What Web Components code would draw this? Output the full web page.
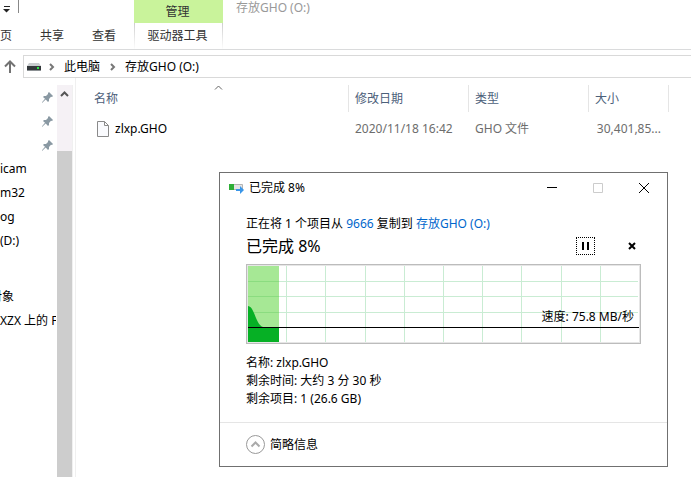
<!DOCTYPE html>
<html lang="zh-CN">
<head>
<meta charset="utf-8">
<title>存放GHO (O:)</title>
<style>
body{margin:0;min-height:100vh;background:#fff;color:#000;font:12px/18px "Noto Sans","Noto Sans CJK SC",sans-serif;overflow:hidden}
</style>
</head>
<body>
<explorer-window></explorer-window>
<script>
const define=(name,html)=>{
  const t=document.createElement('template');
  t.innerHTML='<style>*{box-sizing:border-box}button{font:inherit;color:inherit;background:none;border:0;padding:0;margin:0}svg{display:block}</style>'+html;
  customElements.define(name,class extends HTMLElement{
    constructor(){super();this.attachShadow({mode:'open'}).append(t.content.cloneNode(true));}
  });
};

define('ribbon-header',`
<style>
:host{display:grid;grid-template-columns:134px 89px 1fr;grid-template-rows:23px 26px;border-bottom:1px solid #dadbdc;color:#333}
.quick{display:flex;gap:8px;padding-left:3px}
.quick i{width:1px;height:13px;background:#888}
.manage{background:#c9f39b;text-align:center;padding-right:2px}
.title{color:#999;padding-left:13px;line-height:16px}
nav{display:flex;gap:28px;align-items:center}
.tool{border:1px solid;border-width:0 1px;border-image:linear-gradient(#ccc,#fff) 1;line-height:26px;padding-right:2px}
button{white-space:nowrap}
</style>
<div class="quick"><svg width="7" height="13"><path d="M1 6.500h6" stroke="#222"/><path d="M0 9h7L3.500 12.500z" fill="#222"/></svg><i></i></div>
<button class="manage">管理</button><div class="title">存放GHO (O:)</div>
<nav><button>页</button><button>共享</button><button>查看</button></nav>
<button class="tool">驱动器工具</button>`);

define('address-bar',`
<style>
:host{display:flex;padding-top:5px;height:28px}
.up{width:23px;display:flex;align-items:center;padding-left:4px}
.box{flex:1;display:flex;align-items:center;border:1px solid #d9d9d9;border-right:0;padding-left:3px}
.box button{padding:0 10px 0 9px}
</style>
<button class="up" aria-label="上移"><svg width="12" height="13" fill="none" stroke="#727272" stroke-width="2"><path d="M6 13V2M1 6.500l5-5 5 5"/></svg></button>
<div class="box">
<svg width="14" height="10"><path d="M2 1h10l2 3H0z" fill="#c9cccf"/><path d="M0 4h14v4H0z" fill="#33383b"/><path d="M0 8h14v1H0z" fill="#8c9194"/><path d="M10 5h2v2h-2z" fill="#2bea45"/></svg>
<svg width="14" height="8" fill="none" stroke="#777" stroke-width="2"><path d="M9 1l3 3-3 3"/></svg>
<button>此电脑</button>
<svg width="6" height="8" fill="none" stroke="#777" stroke-width="2"><path d="M1 1l3 3-3 3"/></svg>
<button>存放GHO (O:)</button>
</div>`);

define('pin-item',`
<style>:host{display:flex;justify-content:flex-end;align-items:center;height:24px;padding-right:4px}</style>
<svg width="11" height="11" fill="#8a99a3"><path d="M7 0l4 4-1 1-1-.2L7 7v2L6 10 3.700 7.600 0 11l-.2-.5L3 6.800 1 5l1-1h2l2-2V1z"/></svg>`);
define('tree-item',`
<style>:host{display:block;height:24px;line-height:24px;white-space:nowrap}:host([cut]){margin-left:-10px}:host([section]){margin-top:32px}</style><slot></slot>`);

define('side-bar',`
<style>
:host{display:flex;width:76px;border-right:1px solid #f0f0f0}
.list{width:57px;padding-top:7px;overflow:hidden}
.names{width:56px;overflow:hidden}
.bar{width:16px;margin-top:7px;background:#f5f1f5;display:flex;flex-direction:column;border-right:1px solid #f0f0f0}
.bar button{height:66px;padding:6px 0 0 3px;display:flex}
.thumb{flex:1;background:#cdcdcd}
</style>
<div class="list"><pin-item></pin-item><pin-item></pin-item><pin-item></pin-item>
<div class="names"><tree-item>icam</tree-item><tree-item>m32</tree-item><tree-item>og</tree-item><tree-item>(D:)</tree-item><tree-item section cut>对象</tree-item><tree-item>XZX 上的 F</tree-item></div></div>
<div class="bar"><button aria-label="向上滚动"><svg width="9" height="6" fill="none" stroke="#555" stroke-width="2"><path d="M1 5l3.500-3.500L8 5"/></svg></button><div class="thumb"></div></div>`);

define('file-list',`
<style>
:host{display:block;flex:1;padding-top:7px;overflow:hidden;position:relative}
table{border-collapse:separate;border-spacing:0;table-layout:fixed;width:593px;text-align:left}
th{font-weight:400;color:#4c607a;height:27px;padding:0 0 0 6px;border-right:1px solid #e5e5e5}
td{height:34px;padding:0 0 0 6px;color:#6d6d6d;white-space:nowrap}
th:first-child,td:first-child{padding-left:18px}
td:first-child{color:#000}
td:last-child{text-align:right;padding-right:8px}
.name{display:flex;align-items:center;gap:5px;padding-left:2px}
.sort{position:absolute;left:138px;top:7px}
</style>
<table><colgroup><col style="width:273px"><col style="width:120px"><col style="width:120px"><col style="width:80px"></colgroup>
<thead><tr><th>名称</th><th>修改日期</th><th>类型</th><th>大小</th></tr></thead>
<tbody><tr><td><div class="name"><svg width="14" height="17" fill="#fafbfe" stroke="#8a8a8a"><path d="M1.500.5h7l4 4v11h-11zM8.500.5v4h4"/></svg>zlxp.GHO</div></td><td>2020/11/18 16:42</td><td>GHO 文件</td><td>30,401,85...</td></tr></tbody></table>
<svg class="sort" width="9" height="5" fill="none" stroke="#666"><path d="M1 4.500l3.500-3.500L8 4.500"/></svg>`);

define('speed-chart',`
<style>
:host{display:block;position:relative;border:1px solid #bcbcbc;padding:1px;background:#e6e6e6}
svg{width:100%;height:76px;background:#fff}
.speed{position:absolute;right:6px;bottom:17px;line-height:18px}
</style>
<svg viewBox="0 0 391 76" preserveAspectRatio="none">
<path d="M0 0h31v76H0z" fill="#a6e895"/>
<path d="M0 15.500h31M0 30.500h31M0 46.500h31" stroke="#8bdc80"/>
<path d="M31 15.500h359M31 30.500h359M31 46.500h359M38.500 0v76M77.500 0v76M117.500 0v76M156.500 0v76M195.500 0v76M234.500 0v76M273.500 0v76M313.500 0v76M352.500 0v76" stroke="#c9ecd3" fill="none"/>
<path d="M0 40C7 41 7 58 15 61H31V76H0z" fill="#06b025"/>
<path d="M0 61.500h391" stroke="#000"/>
</svg><div class="speed">速度: 75.8 MB/秒</div>`);

define('copy-dialog',`
<style>
:host{display:block;background:#fff;border:1px solid #707070}
header{display:flex;align-items:center;height:29px;padding-left:9px}
header span{flex:1;padding-left:5px}
header button{width:46px;height:29px;display:grid;place-items:center}
main{padding:13px 26px 14px}
p{margin:0}
a{color:#0066cc;text-decoration:none}
.status{display:flex;align-items:center;height:26px;margin-bottom:5px;font-size:16px}
.status span{flex:1}
.status button{width:19px;height:18px;display:grid;place-items:center}
.pause{border:1px dotted #000}
.status .close{margin-left:27px}
.info{padding-top:10px}
footer{border-top:1px solid #e5e5e5;padding:12px 26px}
footer button{display:flex;align-items:center;gap:5px;height:19px}
</style>
<header>
<svg width="15" height="12"><path d="M.5 2.500h13v5H.5z" fill="#e4e4e4" stroke="#b4b4b4"/><path d="M0 2h5v6H0z" fill="#2eae36"/><path d="M7 7h4V4l4 4-4 4v-3H7z" fill="#3a96e8"/></svg>
<span>已完成 8%</span>
<button aria-label="最小化"><svg width="10" height="10"><path d="M0 4.500h10" stroke="#000"/></svg></button>
<button aria-label="最大化" disabled><svg width="10" height="10"><path d="M.5.5h9v9h-9z" stroke="#ccc" fill="none"/></svg></button>
<button aria-label="关闭"><svg width="10" height="10"><path d="M0 0l10 10M10 0L0 10" stroke="#000"/></svg></button>
</header>
<main>
<p>正在将 1 个项目从 <a href="#source">9666</a> 复制到 <a href="#target">存放GHO (O:)</a></p>
<div class="status"><span>已完成 8%</span>
<button class="pause" aria-label="暂停"><svg width="7" height="8"><path d="M0 0h2v8H0zM5 0h2v8H5z"/></svg></button>
<button class="close" aria-label="取消"><svg width="8" height="8"><path d="M1 1l6 6M7 1L1 7" stroke="#000" stroke-width="2"/></svg></button></div>
<speed-chart></speed-chart>
<div class="info"><p>名称: zlxp.GHO</p><p>剩余时间: 大约 3 分 30 秒</p><p>剩余项目: 1 (26.6 GB)</p></div>
</main>
<footer><button><svg width="19" height="19" fill="none"><circle cx="9.500" cy="9.500" r="9" stroke="#999"/><path d="M5.500 11.500l4-4 4 4" stroke="#aaa" stroke-width="2"/></svg>简略信息</button></footer>`);

define('explorer-window',`
<style>
:host{display:flex;flex-direction:column;min-height:100vh;position:relative}
.body{flex:1;display:flex}
copy-dialog{position:absolute;left:219px;right:23px;top:172px}
</style>
<ribbon-header></ribbon-header><address-bar></address-bar>
<div class="body"><side-bar></side-bar><file-list></file-list></div>
<copy-dialog></copy-dialog>`);
</script>
</body>
</html>
